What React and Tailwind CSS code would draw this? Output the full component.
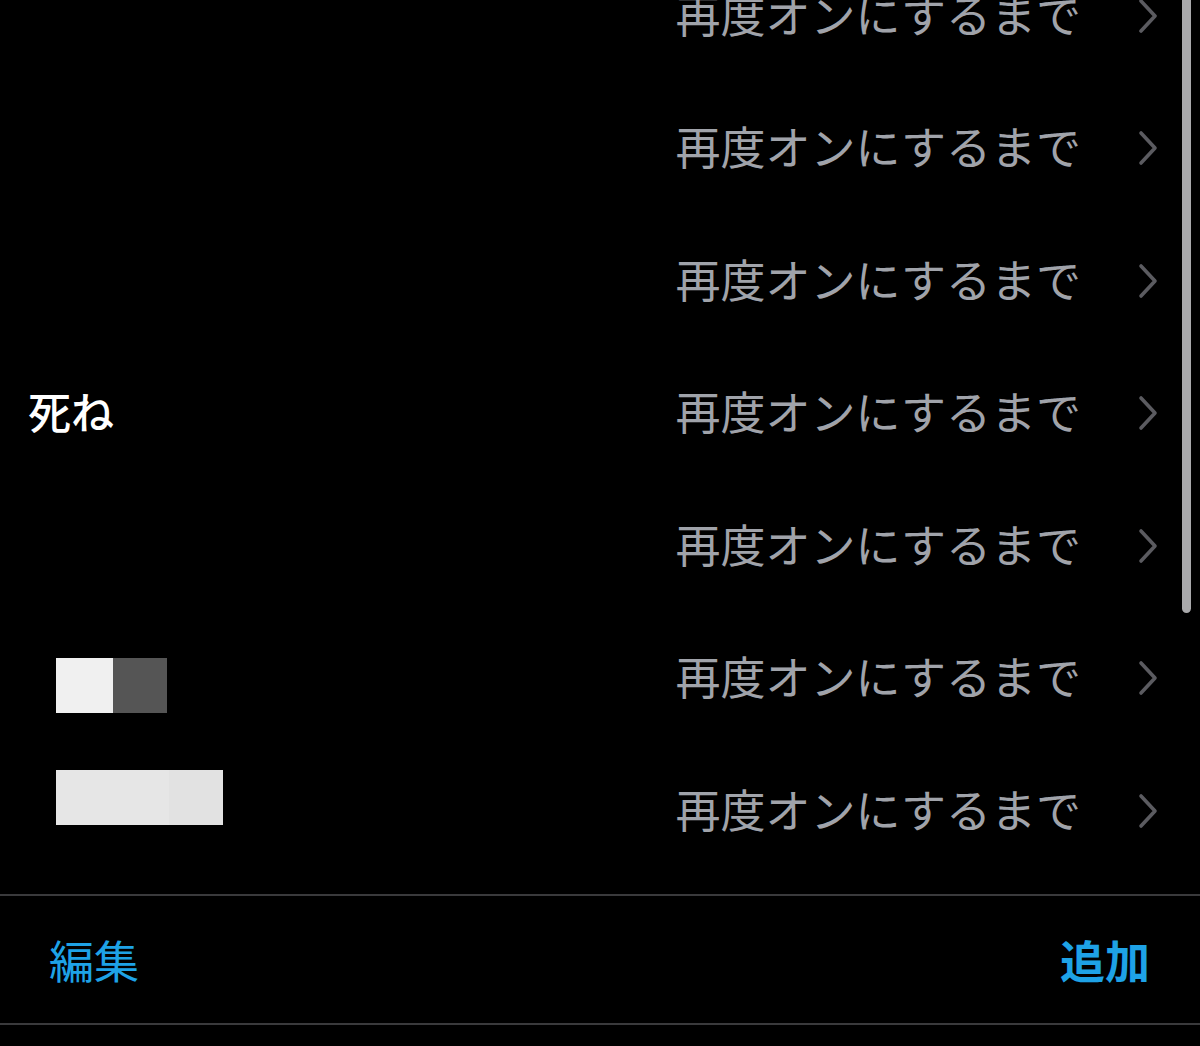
import React from "react";

const JP = { fontFamily: '"Noto Sans CJK JP", "Noto Sans", sans-serif' };

function Chevron() {
  return (
    <svg width="22" height="36" viewBox="0 0 22 36" className="mt-[5px] shrink-0">
      <path d="M4 3 L18 18 L4 33" fill="none" stroke="#5b5b60" strokeWidth="3.6" strokeLinecap="round" strokeLinejoin="round" />
    </svg>
  );
}

function Row({ children }) {
  return (
    <div className="flex h-[132.5px] items-center justify-between pl-[28px] pr-[41px]">
      <div className="flex items-center">{children}</div>
      <div className="flex items-center gap-[56px]">
        <span className="text-[45px] leading-none text-[#a0a3aa]" style={JP}>再度オンにするまで</span>
        <Chevron />
      </div>
    </div>
  );
}

export default function App() {
  return (
    <div className="relative h-[1046px] w-[1200px] overflow-hidden bg-black" style={JP}>
      <div className="-mt-[53px] flex flex-col">
        <Row />
        <Row />
        <Row />
        <Row>
          <span className="text-[43px] font-medium leading-none text-white">死ね</span>
        </Row>
        <Row />
        <Row>
          <div className="ml-[28px] mt-[20px] flex h-[55px]">
            <div className="w-[57px] bg-[#f0f0f0]" />
            <div className="w-[54px] bg-[#555555]" />
          </div>
        </Row>
        <Row>
          <div className="mb-[22px] ml-[28px] flex h-[55px]">
            <div className="w-[113px] bg-[#e6e6e6]" />
            <div className="w-[54px] bg-[#e2e2e2]" />
          </div>
        </Row>
      </div>
      <div className="mt-[19px] flex h-[131px] items-center justify-between border-y-2 border-[#3a3a3c] pl-[49px] pr-[50px]">
        <span className="text-[45px] leading-none text-[#1ea2e6]">編集</span>
        <span className="text-[45px] font-bold leading-none text-[#1ea2e6]">追加</span>
      </div>
      <div className="absolute right-[9px] top-0 h-[613px] w-[9px] rounded-b-full bg-[#a9a9ab]" />
    </div>
  );
}
